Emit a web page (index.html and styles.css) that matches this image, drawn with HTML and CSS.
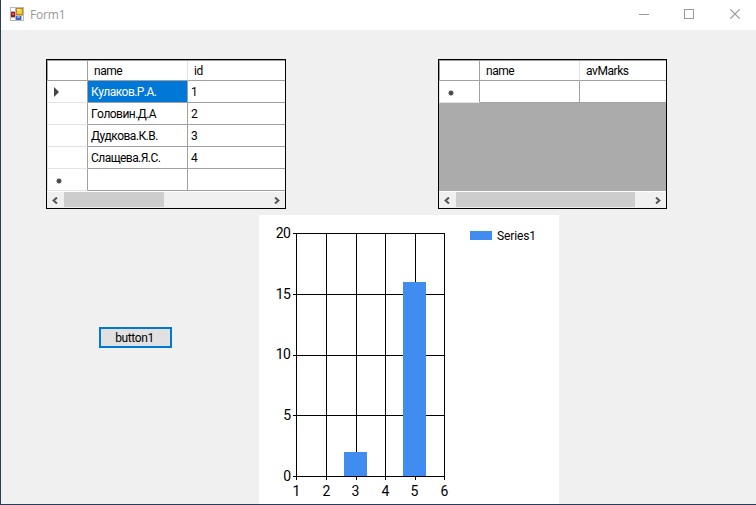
FILE: index.html
```html
<!DOCTYPE html>
<html lang="en">
<head>
<meta charset="utf-8">
<title>Form1</title>
<link rel="stylesheet" href="styles.css">
</head>
<body>
<div class="window">
  <header class="titlebar">
    <svg class="app-icon" width="14" height="14" viewBox="0 0 14 14" shape-rendering="crispEdges">
      <rect width="14" height="14" fill="#b9b9b9"/>
      <rect x="1" y="1" width="4" height="3" fill="#fff"/>
      <rect x="1" y="11" width="4" height="2" fill="#fff"/>
      <rect x="12" y="9" width="1" height="4" fill="#fff"/>
      <rect x="1" y="5" width="4" height="5" fill="#a01818"/>
      <rect x="2" y="6" width="2" height="2" fill="#e05a4a"/>
      <rect x="6" y="1" width="7" height="7" fill="#c08a08"/>
      <rect x="7" y="2" width="5" height="5" fill="#f8c838"/>
      <rect x="7" y="2" width="3" height="2" fill="#fde690"/>
      <rect x="6" y="9" width="5" height="4" fill="#3468c8"/>
      <rect x="7" y="9" width="3" height="2" fill="#78a8f0"/>
    </svg>
    <span class="title">Form1</span>
    <svg class="controls" width="101" height="10" viewBox="0 0 101 10" fill="none" stroke="#999">
      <path d="M0 5.5h10M45.5 .5h9v9h-9z" shape-rendering="crispEdges"/>
      <path d="M91.3 .3l9.4 9.4M100.7 .3l-9.4 9.4" stroke-width="1.2"/>
    </svg>
  </header>
  <main class="client">
    <div class="grids">
      <section class="datagrid students">
        <div class="row head"><div class="rh"></div><div class="cell">name</div><div class="cell">id</div></div>
        <div class="row"><div class="rh"><svg width="5" height="10" viewBox="0 0 5 10"><path d="M0 0L5 5L0 10z" fill="#444"/></svg></div><div class="cell selected">Кулаков.Р.А.</div><div class="cell">1</div></div>
        <div class="row"><div class="rh"></div><div class="cell">Головин.Д.А</div><div class="cell">2</div></div>
        <div class="row"><div class="rh"></div><div class="cell">Дудкова.К.В.</div><div class="cell">3</div></div>
        <div class="row"><div class="rh"></div><div class="cell">Слащева.Я.С.</div><div class="cell">4</div></div>
        <div class="row new"><div class="rh"><svg width="6" height="6" viewBox="0 0 6 6"><path d="M3 0v6M0 3h6M.8 .8l4.4 4.4M5.2 .8L.8 5.2" stroke="#555" stroke-width=".9"/><circle cx="3" cy="3" r="2" fill="#444"/></svg></div><div class="cell"></div><div class="cell"></div></div>
        <div class="scrollbar">
          <svg class="arrow" width="6" height="7" viewBox="0 0 6 7"><path d="M5 .5L1.6 3.5L5 6.5"/></svg>
          <div class="thumb"></div>
          <svg class="arrow end" width="6" height="7" viewBox="0 0 6 7"><path d="M1 .5L4.4 3.5L1 6.5"/></svg>
        </div>
      </section>
      <section class="datagrid marks">
        <div class="row head"><div class="rh"></div><div class="cell">name</div><div class="cell">avMarks</div></div>
        <div class="row new"><div class="rh"><svg width="6" height="6" viewBox="0 0 6 6"><path d="M3 0v6M0 3h6M.8 .8l4.4 4.4M5.2 .8L.8 5.2" stroke="#555" stroke-width=".9"/><circle cx="3" cy="3" r="2" fill="#444"/></svg></div><div class="cell"></div><div class="cell"></div></div>
        <div class="scrollbar">
          <svg class="arrow" width="6" height="7" viewBox="0 0 6 7"><path d="M5 .5L1.6 3.5L5 6.5"/></svg>
          <div class="thumb"></div>
          <svg class="arrow end" width="6" height="7" viewBox="0 0 6 7"><path d="M1 .5L4.4 3.5L1 6.5"/></svg>
        </div>
      </section>
    </div>
    <div class="lower">
      <button class="button">button1</button>
      <svg class="chart" width="300" height="289" viewBox="0 0 300 289">
        <rect width="300" height="289" fill="#fff"/>
        <g shape-rendering="crispEdges">
          <path stroke="#000" d="M37.5 18v247M67.5 18v247M97.5 18v247M126.5 18v247M156.5 18v247M185.5 18v247M34 18.5h152M34 79.5h152M34 140.5h152M34 200.5h152"/>
          <path fill="#418cf0" d="M85 237h23v24H85zM144 67h23v194h-23zM211 16h22v9h-22z"/>
          <path stroke="#000" d="M34 261.5h152"/>
        </g>
        <g class="axis y">
          <text x="31.5" y="23">20</text><text x="31.5" y="84">15</text><text x="31.5" y="144">10</text><text x="31.5" y="205">5</text><text x="31.5" y="266">0</text>
        </g>
        <g class="axis x">
          <text x="37.5" y="281">1</text><text x="67.5" y="281">2</text><text x="96.5" y="281">3</text><text x="126.5" y="281">4</text><text x="155.5" y="281">5</text><text x="185.5" y="281">6</text>
        </g>
        <text class="legend" x="238" y="25" textLength="39">Series1</text>
      </svg>
    </div>
  </main>
</div>
</body>
</html>
```
FILE: styles.css
```css
* { box-sizing: border-box; }
body { margin: 0; font: 12px/14px Roboto, "Liberation Sans", sans-serif; font-kerning: none; color: #000; }
.window { width: 756px; height: 505px; display: flex; flex-direction: column; border-left: 1px solid #2b3c57; border-bottom: 1px solid #2b3c57; background: #f0f0f0; overflow: hidden; }
.titlebar { height: 30px; flex: none; display: flex; background: #fff; padding: 7px 16px 0 9px; }
.title { margin: 0 0 0 6px; font: 12px/16px "Open Sans", "Noto Sans", sans-serif; color: #999; letter-spacing: -.2px; }
.controls { margin: 2px 0 0 auto; }
.client { padding: 29px 0 0 45px; }
.grids { display: flex; gap: 152px; }
.datagrid { height: 150px; border: 1px solid #000; background: #ababab; display: flex; flex-direction: column; overflow: hidden; }
.students { width: 240px; }
.marks { width: 229px; }
.row { height: 22px; flex: none; display: grid; grid-template-columns: 41px 100px 1fr; background: #fff; }
.head { height: 21px; border-top: 1px solid #a0a0a0; }
.rh { display: flex; align-items: center; border-left: 1px solid #e3e3e3; border-right: 1px solid #a0a0a0; border-bottom: 1px solid #e3e3e3; padding: 1px 0 0 6px; }
.new .rh { padding-left: 8px; padding-top: 2px; }
.cell { border-right: 1px solid #a0a0a0; border-bottom: 1px solid #a0a0a0; padding: 4px 0 0 3px; letter-spacing: -.55px; white-space: nowrap; }
.cell:last-child { border-right: 0; }
.head .rh { border-color: #a0a0a0; }
.head .cell { padding: 3px 0 0 6px; border-right-color: #e3e3e3; letter-spacing: -.45px; }
.selected { background: #0078d7; color: #fff; }
.scrollbar { height: 17px; flex: none; margin-top: auto; display: flex; align-items: center; background: #f0f0f0; border-top: 1px solid #fff; padding: 0 5px; }
.arrow { fill: none; stroke: #555; stroke-width: 2; }
.arrow.end { margin-left: auto; }
.thumb { height: 15px; width: 100px; margin-left: 6px; margin-bottom: 1px; background: #cdcdcd; }
.marks .thumb { width: 179px; }
.lower { display: flex; padding: 6px 0 0 53px; }
.button { width: 73px; height: 21px; margin: 112px 87px 0 0; padding: 2px 2px 0 0; border: 2px solid #0078d7; background: #e1e1e1; color: #000; font: 12px/15px Roboto, "Liberation Sans", sans-serif; letter-spacing: -.4px; }
.chart { display: block; flex: none; }
.axis { font-size: 14px; }
.axis.y { text-anchor: end; letter-spacing: -.5px; }
.axis.x { text-anchor: middle; }
.legend { font-size: 12px; }
```
